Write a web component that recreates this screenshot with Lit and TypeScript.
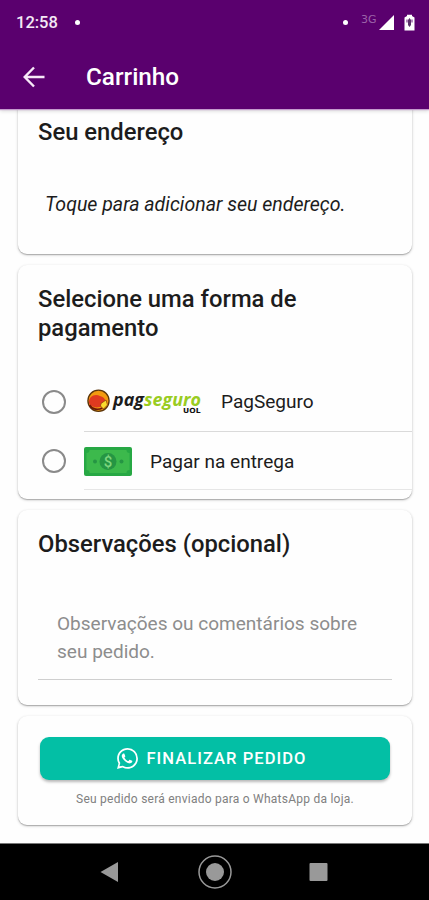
import { LitElement, html, css, svg } from "lit";
import { customElement } from "lit/decorators.js";

const pagseguroLogo = svg`
  <svg class="logo" viewBox="0 0 120 34" width="120" height="34">
    <circle cx="14.5" cy="16.8" r="10.6" fill="#f39a10" stroke="#5a340a" stroke-width="1.300" />
    <path d="M5 19C4.500 12 11 9.500 16 12c3 .5 5 2.500 5.500 5l-3 5c-6 3-12 1-13.500-3z" fill="#e03a20" />
    <path d="M5.500 21c3 5 9 5 13 3" fill="none" stroke="#6d1608" stroke-width="1.600" />
    <path d="M17 19.500l5-3.500 1.500 5-4 4-3-3z" fill="#fbdc2d" stroke="#8a3a0a" stroke-width=".7" />
    <text x="29" y="21.500" textLength="88" lengthAdjust="spacingAndGlyphs" class="brand"><tspan
      fill="#1c1c1c">pag</tspan><tspan fill="#99cc22">seguro</tspan></text>
    <text x="99" y="29.300" textLength="17.500" lengthAdjust="spacingAndGlyphs" class="uol">UOL</text>
  </svg>`;

const cashIcon = svg`
  <svg class="cash" viewBox="0 0 48 29" width="48" height="29">
    <rect width="48" height="29" rx="2" fill="#27a844" />
    <path d="M5.500 3h37q0 3 3 3v17q-3 0-3 3h-37q0-3-3-3V6q3 0 3-3z" fill="#3cb94c" />
    <circle cx="24" cy="14.500" r="8.500" fill="#259543" />
    <circle cx="11" cy="14.500" r="2" fill="#259543" />
    <circle cx="37.500" cy="14.500" r="2" fill="#259543" />
    <text x="24" y="20" text-anchor="middle" class="dollar">$</text>
  </svg>`;

const whatsappIcon = svg`
  <svg viewBox="0 0 24 24" width="21" height="21" fill="#fff">
    <path d="M.057 24l1.687-6.163a11.870 11.870 0 0 1-1.587-5.946C.16 5.335 5.495 0 12.050 0a11.820 11.820 0 0 1 8.413 3.488 11.820 11.820 0 0 1 3.480 8.414c-.003 6.557-5.338 11.892-11.893 11.892a11.900 11.900 0 0 1-5.688-1.448L.057 24zm6.597-3.807c1.676.995 3.276 1.591 5.392 1.592 5.448 0 9.886-4.434 9.889-9.885.002-5.462-4.415-9.890-9.881-9.892-5.452 0-9.887 4.434-9.889 9.884a9.860 9.860 0 0 0 1.599 5.391l-.999 3.648 3.889-.738z" />
    <path d="M17.472 14.720c-.074-.124-.272-.198-.570-.347-.297-.149-1.758-.868-2.031-.967-.272-.099-.470-.149-.669.149-.198.297-.768.967-.941 1.165-.173.198-.347.223-.644.074-.297-.149-1.255-.462-2.390-1.475-.883-.788-1.480-1.761-1.653-2.059-.173-.297-.018-.458.130-.606.134-.133.297-.347.446-.521.151-.172.200-.296.300-.495.099-.198.050-.372-.025-.521-.075-.148-.669-1.611-.916-2.206-.242-.579-.487-.501-.669-.510l-.570-.010c-.198 0-.520.074-.792.372s-1.040 1.016-1.040 2.479 1.065 2.876 1.213 3.074c.149.198 2.095 3.200 5.076 4.487.709.306 1.263.489 1.694.626.712.226 1.360.194 1.872.118.571-.085 1.758-.719 2.006-1.413.248-.695.248-1.290.174-1.414z" />
  </svg>`;

@customElement("app-root")
export class AppRoot extends LitElement {
  static styles = css`
    :host {
      display: flex;
      flex-direction: column;
      height: 900px;
      background: #fefefe;
      font-family: Roboto, "Liberation Sans", sans-serif;
      color: #1c1c1c;
      overflow: hidden;
    }
    * { box-sizing: border-box; }
    svg { display: block; flex: none; }
    .header {
      height: 109px;
      flex: none;
      background: #5a006e;
      color: #fff;
      z-index: 1;
      box-shadow: 0 1px 1px #c49bce, 0 2px 4px rgba(0, 0, 0, .16);
    }
    .status {
      height: 45px;
      padding: 0 14px 0 16px;
      display: flex;
      align-items: center;
      font-size: 16.500px;
      font-weight: 500;
      color: #f4e8f6;
    }
    .dot { width: 5px; height: 5px; border-radius: 50%; background: #fff; }
    .time { width: 59px; }
    .gap { flex: 1; }
    .net {
      font: 11px/12px "DejaVu Sans", sans-serif;
      color: #9a62a8;
      margin: 0 2px 5px 13px;
      width: 16px;
      white-space: nowrap;
    }
    .battery { margin-left: 10px; }
    .bar { height: 64px; display: flex; align-items: center; padding-left: 23px; }
    .bar-title { margin-left: 41px; padding-bottom: 2px; font-size: 24.300px; font-weight: 500; }
    .content { flex: 1; padding: 0 17px 0 18px; display: flex; flex-direction: column; gap: 11px; }
    .card {
      background: #fefefe;
      border-radius: 9px;
      box-shadow: 0 1px 1px rgba(0, 0, 0, .2), 0 1px 3px rgba(0, 0, 0, .22);
      flex: none;
      padding: 20px 20px 0;
    }
    .address { height: 165px; margin-top: -20px; padding-top: 28.500px; }
    .payment { height: 234px; padding-right: 0; }
    .notes { height: 195px; }
    .checkout { height: 109px; padding: 21px 22px 0; }
    h2 { margin: 0; font-size: 23.800px; line-height: 28.600px; font-weight: 500; }
    .payment h2 { width: 300px; }
    .hint { margin: 46px 0 0 7px; font-size: 19.550px; line-height: 26px; font-style: italic; }
    .options { margin-top: 29.800px; }
    .option { display: flex; align-items: center; height: 60px; padding-left: 4px; }
    .option + .option { height: 58px; }
    .radio { width: 24px; height: 24px; border: 2px solid #8a8a8a; border-radius: 50%; flex: none; }
    .option-body {
      flex: 1;
      height: 100%;
      margin-left: 18px;
      display: flex;
      align-items: center;
      border-bottom: 1px solid #dadada;
      font-size: 19.050px;
    }
    .option + .option .option-body { border-bottom-color: #e6e6e6; padding-top: 2px; }
    .logo + span { margin-left: 17px; }
    .cash + span { margin-left: 18px; }
    .brand { font: italic 700 17.500px "Open Sans", sans-serif; }
    .uol { font: 900 7px "DejaVu Sans", sans-serif; fill: #111; }
    .dollar { font: 500 15px Roboto, sans-serif; fill: #7ed67d; }
    .field {
      margin-top: 51px;
      height: 70.500px;
      padding-left: 19px;
      border-bottom: 1px solid #cfcfcf;
      font-size: 19.050px;
      line-height: 28.800px;
      color: #8d8d8d;
    }
    .button {
      width: 350px;
      height: 43px;
      border: 0;
      padding: 0 6px 0 0;
      border-radius: 9px;
      background: #03bfa5;
      color: #fff;
      display: flex;
      align-items: center;
      justify-content: center;
      gap: 8px;
      font: 500 16.550px Roboto, sans-serif;
      letter-spacing: 1.050px;
      box-shadow: 0 2px 3px rgba(0, 0, 0, .28);
    }
    .note { margin: 11px 0 0; text-align: center; font-size: 12px; letter-spacing: .24px; line-height: 16px; color: #808080; white-space: nowrap; }
    .nav { height: 57px; flex: none; background: #000; border-top: 1px solid #777; }
  `;

  render() {
    return html`
      <header class="header">
        <div class="status">
          <span class="time">12:58</span><i class="dot"></i><span class="gap"></span>
          <i class="dot"></i><span class="net">3G</span>
          <svg width="15" height="15" viewBox="0 0 15 15"><path d="M0 15L15 0V15z" fill="#fff" /></svg>
          <svg class="battery" width="11" height="17" viewBox="0 0 11 17">
            <path d="M3 2V.8h5V2l2.500 1.500V16.500H.5V3.500z" fill="#fff" />
            <path d="M3 5.500v3M8 5.500v3" stroke="#8a4a9a" stroke-width="1.300" />
            <path d="M5.500 4L7 6v5l-1.500 2L4 11V6z" fill="#5a3068" />
          </svg>
        </div>
        <div class="bar">
          <svg width="22" height="22" viewBox="0 0 22 22" fill="none" stroke="#f7e9f8" stroke-width="2.400">
            <path d="M21.500 11H2M11 1.500L1.700 11 11 20.500" />
          </svg>
          <span class="bar-title">Carrinho</span>
        </div>
      </header>
      <main class="content">
        <section class="card address">
          <h2>Seu endereço</h2>
          <p class="hint">Toque para adicionar seu endereço.</p>
        </section>
        <section class="card payment">
          <h2>Selecione uma forma de pagamento</h2>
          <div class="options">
            <div class="option">
              <i class="radio"></i>
              <div class="option-body">${pagseguroLogo}<span>PagSeguro</span></div>
            </div>
            <div class="option">
              <i class="radio"></i>
              <div class="option-body">${cashIcon}<span>Pagar na entrega</span></div>
            </div>
          </div>
        </section>
        <section class="card notes">
          <h2>Observações (opcional)</h2>
          <div class="field">Observações ou comentários sobre seu pedido.</div>
        </section>
        <section class="card checkout">
          <button class="button">${whatsappIcon}<span>FINALIZAR PEDIDO</span></button>
          <p class="note">Seu pedido será enviado para o WhatsApp da loja.</p>
        </section>
      </main>
      <nav class="nav">
        <svg width="429" height="56" viewBox="0 0 429 56" fill="#999">
          <path d="M100.500 28L118 18v20z" />
          <circle cx="215" cy="28" r="9" />
          <circle cx="215" cy="28" r="16" fill="none" stroke="#999" stroke-width="1.500" />
          <rect x="309.500" y="19" width="18" height="18" rx="1" />
        </svg>
      </nav>
    `;
  }
}
